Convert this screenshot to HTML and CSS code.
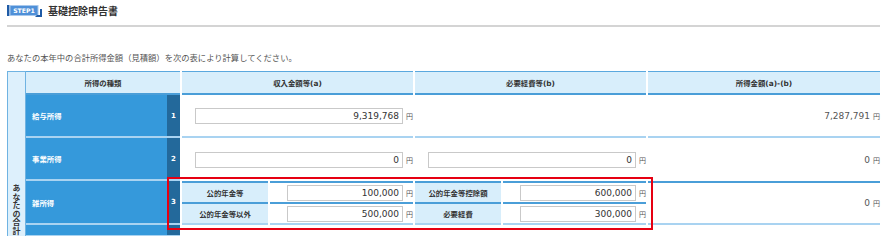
FILE: index.html
```html
<!DOCTYPE html>
<html lang="ja">
<head>
<meta charset="utf-8">
<title>基礎控除申告書</title>
<link rel="stylesheet" href="styles.css">
</head>
<body>
<div class="page">
  <div class="heading">
    <svg class="step" width="36" height="14" viewBox="0 0 36 14">
      <rect x="0" y="1" width="2.5" height="11" fill="#1f5ba6"/>
      <rect x="3" y="1.5" width="28" height="10" fill="#4f90d8" stroke="#a8c8ec" stroke-width="1"/>
      <text x="17" y="9.2" font-size="6.2" font-weight="bold" fill="#ffffff" text-anchor="middle" font-family="DejaVu Sans, sans-serif">STEP1</text>
      <path d="M33 5 H35 V13 H28 L30 11 H33 Z" fill="#1f5ba6"/>
    </svg>
    <h1 class="title">基礎控除申告書</h1>
  </div>
  <hr class="rule">
  <p class="intro">あなたの本年中の合計所得金額（見積額）を次の表により計算してください。</p>

  <div class="tbl">
    <div class="side"><span class="side-text">あなたの合計</span></div>
    <div class="grid">
      <div class="th">所得の種類</div>
      <div class="th">収入金額等(a)</div>
      <div class="th">必要経費等(b)</div>
      <div class="th">所得金額(a)-(b)</div>

      <div class="kind"><span class="kind-name">給与所得</span><span class="kind-no">1</span></div>
      <div class="td r1"><input class="num" value="9,319,768" readonly><span class="yen">円</span></div>
      <div class="td r1"></div>
      <div class="td r1 out">7,287,791 <span class="yen">円</span></div>

      <div class="kind"><span class="kind-name">事業所得</span><span class="kind-no">2</span></div>
      <div class="td"><input class="num" value="0" readonly><span class="yen">円</span></div>
      <div class="td"><input class="num" value="0" readonly><span class="yen">円</span></div>
      <div class="td out">0 <span class="yen">円</span></div>

      <div class="kind"><span class="kind-name">雑所得</span><span class="kind-no">3</span></div>
      <div class="split">
        <div class="sub"><div class="lbl">公的年金等</div><div class="val"><input class="num sm" value="100,000" readonly><span class="yen">円</span></div></div>
        <div class="sub"><div class="lbl">公的年金等以外</div><div class="val"><input class="num sm" value="500,000" readonly><span class="yen">円</span></div></div>
      </div>
      <div class="split">
        <div class="sub"><div class="lbl">公的年金等控除額</div><div class="val"><input class="num sm" value="600,000" readonly><span class="yen">円</span></div></div>
        <div class="sub"><div class="lbl">必要経費</div><div class="val"><input class="num sm" value="300,000" readonly><span class="yen">円</span></div></div>
      </div>
      <div class="td r3 out">0 <span class="yen">円</span></div>

      <div class="kind"><span class="kind-name"></span><span class="kind-no"></span></div>
      <div class="td"></div>
      <div class="td"></div>
      <div class="td"></div>
    </div>
    <div class="highlight"></div>
  </div>
</div>
</body>
</html>
```

FILE: styles.css
```css
* { box-sizing: border-box; }
html, body { margin: 0; padding: 0; background: #ffffff; }
body {
  width: 887px;
  height: 236px;
  overflow: hidden;
  font-family: "DejaVu Sans", "Noto Sans CJK JP", sans-serif;
  color: #333333;
}
.page { padding: 0 7px; }

.heading {
  display: flex;
  align-items: center;
  gap: 5px;
  height: 21px;
}
.step { display: block; flex: none; }
.title {
  margin: 0;
  font-family: "Noto Sans CJK JP", sans-serif;
  font-size: 10px;
  line-height: 14px;
  font-weight: bold;
  color: #333333;
}
.rule {
  width: 873px;
  height: 0;
  margin: 4px 0 0;
  border: 0;
  border-top: 2px solid #d4d4d4;
}
.intro {
  margin: 24px 0 0;
  font-family: "Noto Sans CJK JP", sans-serif;
  font-size: 8.3px;
  line-height: 12px;
  color: #555555;
}

.tbl {
  position: relative;
  display: flex;
  width: 873px;
  margin-top: 8px;
}
.side {
  flex: none;
  width: 19px;
  height: 165px;
  border: 1px solid #6fb3e2;
  border-bottom: 0;
  background: #ddf0fc;
  padding-top: 112px;
  display: flex;
  justify-content: center;
}
.side-text {
  writing-mode: vertical-rl;
  font-family: "Noto Sans CJK JP", sans-serif;
  font-size: 8px;
  line-height: 9px;
  letter-spacing: 0.6px;
  font-weight: bold;
  color: #333333;
}
.grid {
  display: grid;
  grid-template-columns: 154px 231px 231px 232px;
  grid-template-rows: 24px 43px 43px 44px 12px;
  column-gap: 2px;
}
.th {
  background: #d8eefb;
  border-top: 1px solid #5aa8de;
  border-bottom: 2px solid #4a9ed8;
  display: flex;
  align-items: center;
  justify-content: center;
  font-size: 7.4px;
  font-weight: bold;
  color: #333333;
}
.kind {
  display: flex;
  border-bottom: 2px solid #a9d3f1;
}
.kind-name {
  flex: 1;
  display: flex;
  align-items: center;
  padding-left: 6px;
  background: #3599db;
  color: #ffffff;
  font-size: 7.4px;
  font-weight: bold;
}
.kind-no {
  flex: none;
  width: 13px;
  display: flex;
  align-items: center;
  justify-content: center;
  background: #23699b;
  color: #ffffff;
  font-size: 7px;
  font-weight: bold;
}
.td {
  display: flex;
  align-items: center;
  justify-content: flex-end;
  gap: 3px;
}
.r1 { border-bottom: 2px solid #a9d3f1; }
.r3 {
  border-top: 2px solid #4a9ed8;
  border-bottom: 2px solid #a9d3f1;
}
.out {
  font-size: 9px;
  color: #555555;
}
.split {
  display: grid;
  grid-template-rows: 21px 23px;
}
.sub {
  display: grid;
  grid-template-columns: 86px 1fr;
  column-gap: 2px;
}
.lbl {
  background: #d8eefb;
  border-top: 2px solid #4a9ed8;
  display: flex;
  align-items: center;
  justify-content: center;
  font-size: 7.4px;
  font-weight: bold;
  color: #333333;
}
.val {
  border-top: 2px solid #4a9ed8;
  display: flex;
  align-items: center;
  justify-content: flex-end;
  gap: 3px;
}
.sub:last-child .lbl,
.sub:last-child .val { border-bottom: 2px solid #a9d3f1; }

.num {
  width: 208px;
  height: 16px;
  margin: 0;
  padding: 0 3px;
  border: 1px solid #c9c9c9;
  background: #ffffff;
  font-family: "DejaVu Sans", sans-serif;
  font-size: 9px;
  color: #333333;
  text-align: right;
  outline: none;
}
.num.sm { width: 116px; }
.yen {
  font-family: "Noto Sans CJK JP", sans-serif;
  font-size: 7px;
  color: #555555;
}
.highlight {
  position: absolute;
  left: 160px;
  top: 106px;
  width: 486px;
  height: 53px;
  border: 2px solid #e60012;
  pointer-events: none;
}
```
